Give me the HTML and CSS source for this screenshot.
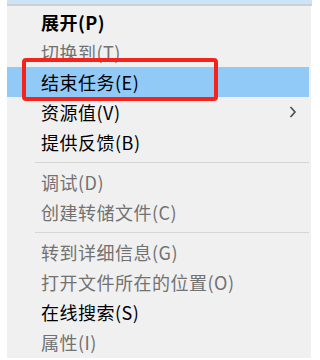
FILE: index.html
```html
<!DOCTYPE html>
<html lang="zh-CN">
<head>
<meta charset="utf-8">
<link rel="stylesheet" href="styles.css">
</head>
<body>
<div class="page">
  <div class="topstrip"></div>
  <div class="menu">
    <div class="item bold">展开(P)</div>
    <div class="item disabled">切换到(T)</div>
    <div class="item active">结束任务(E)</div>
    <div class="item sub"><span>资源值(V)</span><svg class="chev" width="8" height="12" viewBox="0 0 8 12"><path d="M1.5 1 L6 6 L1.5 11" fill="none" stroke="#4a4a4a" stroke-width="1.6"/></svg></div>
    <div class="item">提供反馈(B)</div>
    <div class="sep"></div>
    <div class="item disabled">调试(D)</div>
    <div class="item disabled">创建转储文件(C)</div>
    <div class="sep"></div>
    <div class="item disabled">转到详细信息(G)</div>
    <div class="item disabled">打开文件所在的位置(O)</div>
    <div class="item">在线搜索(S)</div>
    <div class="item disabled">属性(I)</div>
  </div>
  <div class="redbox"></div>
</div>
</body>
</html>
```
FILE: styles.css
```css
html, body {
  margin: 0;
  padding: 0;
  background: #ffffff;
}
.page {
  position: relative;
  width: 312px;
  height: 360px;
  overflow: hidden;
  font-family: "Noto Sans CJK SC", "Noto Sans", sans-serif;
  font-size: 18px;
  letter-spacing: 0.5px;
}
.topstrip {
  margin-left: 7px;
  height: 4px;
  background: #cce4f7;
  border-bottom: 2px solid #cfcfcf;
}
.menu {
  margin-left: 7px;
  width: 304px;
  background: #f0f0f0;
  padding: 1px 0 1px 0;
}
.item {
  display: flex;
  align-items: center;
  height: 30px;
  line-height: 30px;
  padding-left: 34px;
  margin-right: 2px;
  color: #000000;
}
.bold {
  font-weight: 700;
}
.disabled {
  color: #727272;
}
.active {
  background: #91c9f7;
}
.sub .chev {
  margin-left: auto;
  margin-right: 12px;
}
.sep {
  height: 1px;
  background: #d5d5d5;
  margin: 5px 2px 4px 28px;
}
.redbox {
  position: absolute;
  left: 22px;
  top: 58px;
  width: 188px;
  height: 35px;
  border: 4px solid #f5231b;
  border-radius: 4px;
}
```
